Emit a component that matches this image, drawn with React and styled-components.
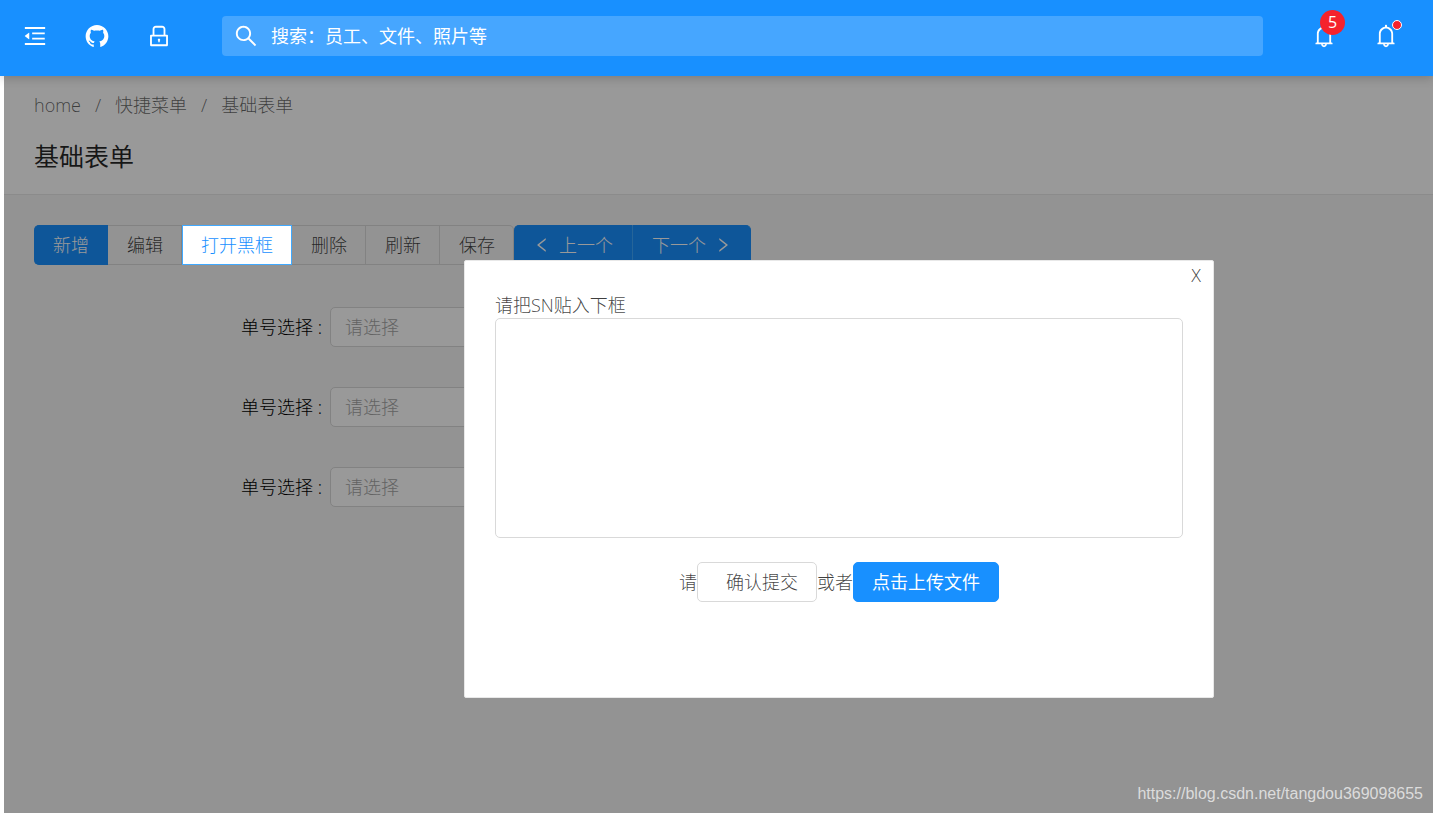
import React from 'react';
import styled, { createGlobalStyle } from 'styled-components';
import {
    AiFillGithub,
    AiOutlineBell,
    AiOutlineLeft,
    AiOutlineLock,
    AiOutlineMenuFold,
    AiOutlineRight,
    AiOutlineSearch,
} from 'react-icons/ai';

const GlobalStyle = createGlobalStyle`
    * {
        box-sizing: border-box;
    }
    body {
        margin: 0;
        background: #fff;
        color: rgba(0, 0, 0, 0.75);
        font-family: "Open Sans", "Noto Sans CJK SC", sans-serif;
        font-size: 18px;
        font-weight: 300;
        line-height: 26px;
    }
    button, input, select, textarea {
        font: inherit;
        color: inherit;
    }
`;

const Page = styled.div`
    display: flex;
    flex-direction: column;
    min-height: 100vh;
`;

const Header = styled.header`
    position: relative;
    z-index: 20;
    display: flex;
    align-items: flex-start;
    height: 76px;
    padding: 16px 16px 0 4px;
    background: #1890ff;
    color: #fff;
    box-shadow: 0 2px 10px rgba(0, 0, 0, 0.2);
`;

const IconButton = styled.button`
    display: flex;
    align-items: center;
    justify-content: center;
    width: 62px;
    height: 40px;
    padding: 0;
    border: 0;
    background: none;
    font-size: 26px;
    cursor: pointer;
`;

const SearchBox = styled.label`
    display: flex;
    flex: 1;
    align-items: center;
    gap: 12px;
    height: 40px;
    margin: 0 30px 0 32px;
    padding: 0 11px;
    border-radius: 4px;
    background: #46a6ff;
    font-size: 26px;
`;

const SearchInput = styled.input`
    flex: 1;
    min-width: 0;
    padding: 0;
    border: 0;
    outline: 0;
    background: none;
    font-size: 18px;
    font-weight: 400;
    &::placeholder {
        color: #fff;
        opacity: 1;
    }
`;

const BadgeHolder = styled.span`
    position: relative;
    display: flex;
`;

const CountBadge = styled.span`
    position: absolute;
    top: -13px;
    left: 9px;
    width: 25px;
    height: 25px;
    border-radius: 13px;
    background: #f5222d;
    font-size: 16px;
    font-weight: 400;
    line-height: 25px;
    text-align: center;
`;

const DotBadge = styled.span`
    position: absolute;
    top: -3px;
    right: -3px;
    width: 10px;
    height: 10px;
    border: 1px solid #fff;
    border-radius: 50%;
    background: #f5222d;
`;

const Body = styled.div`
    position: relative;
    flex: 1;
    margin-left: 4px;
    background: #f5f5f5;
`;

const PageHead = styled.div`
    padding: 16px 30px 20px;
    border-bottom: 1px solid #e8e8e8;
    background: #fff;
`;

const Breadcrumb = styled.nav`
    display: flex;
    gap: 14px;
    color: rgba(0, 0, 0, 0.6);
`;

const Crumb = styled.a`
    color: inherit;
    text-decoration: none;
`;

const Title = styled.h1`
    margin: 20px 0 0;
    color: rgba(0, 0, 0, 0.85);
    font-size: 25px;
    font-weight: 400;
    line-height: 36px;
`;

const Content = styled.main`
    padding: 30px;
`;

const Toolbar = styled.div`
    display: flex;
`;

const ButtonGroup = styled.div`
    display: flex;
    & > button:first-child {
        border-radius: 5px 0 0 5px;
    }
    & > button:last-child {
        border-radius: 0 5px 5px 0;
    }
`;

const ToolButton = styled.button`
    height: 40px;
    padding: 0 18px 0 19px;
    border: 1px solid #d9d9d9;
    border-left: 0;
    background: none;
    white-space: nowrap;
    cursor: pointer;
`;

const PrimaryToolButton = styled(ToolButton)`
    display: flex;
    align-items: center;
    gap: 8px;
    border-color: #1890ff;
    background: #1890ff;
    color: #fff;
    & + & {
        border-left: 1px solid #40a9ff;
    }
`;

/* stays above the mask while the dialog is open */
const ActiveToolButton = styled(ToolButton)`
    position: relative;
    z-index: 11;
    padding: 0 18px;
    border: 1px solid #40a9ff;
    background: #fff;
    color: #1890ff;
`;

const Form = styled.form`
    display: grid;
    gap: 40px;
    margin-top: 42px;
`;

const FormRow = styled.div`
    display: grid;
    grid-template-columns: 288px minmax(0, 572px);
    align-items: center;
    gap: 8px;
`;

const FormLabel = styled.label`
    color: #000;
    text-align: right;
`;

const Select = styled.select`
    appearance: none;
    width: 100%;
    height: 40px;
    padding: 0 14px;
    border: 1px solid #d9d9d9;
    border-radius: 5px;
    background: #fff;
    color: #a6a6a6;
`;

const Mask = styled.div`
    position: absolute;
    inset: 0;
    z-index: 10;
    background: rgba(0, 0, 0, 0.4);
`;

const Dialog = styled.section`
    position: absolute;
    top: 184px;
    left: 460px;
    z-index: 12;
    display: flex;
    flex-direction: column;
    width: 750px;
    height: 438px;
    padding: 0 30px;
    border: 1px solid #e8e8e8;
    border-radius: 2px;
    background: #fff;
`;

const CloseButton = styled.button`
    align-self: flex-end;
    height: 27px;
    margin: 0 -24px 4px 0;
    padding: 0 6px;
    border: 0;
    background: none;
    cursor: pointer;
`;

const SnInput = styled.textarea`
    height: 220px;
    padding: 5px 14px;
    border: 1px solid #d9d9d9;
    border-radius: 5px;
    outline: 0;
    resize: none;
`;

const DialogActions = styled.div`
    display: flex;
    align-items: center;
    justify-content: center;
    margin-top: 24px;
`;

const ConfirmButton = styled.button`
    height: 40px;
    padding: 0 18px 0 28px;
    border: 1px solid #d9d9d9;
    border-radius: 5px;
    background: #fff;
    cursor: pointer;
`;

const UploadButton = styled(ConfirmButton)`
    padding: 0 18px;
    border-color: #1890ff;
    background: #1890ff;
    color: #fff;
    font-weight: 400;
`;

const Watermark = styled.span`
    position: absolute;
    right: 10px;
    bottom: 8px;
    z-index: 13;
    color: #dcdcdc;
    font-family: "Liberation Sans", sans-serif;
    font-size: 16px;
    font-weight: 400;
    line-height: 22px;
`;

const orders = ['order-1', 'order-2', 'order-3'];

export default function App() {
    return (
        <Page>
            <GlobalStyle />
            <Header>
                <IconButton aria-label="菜单"><AiOutlineMenuFold /></IconButton>
                <IconButton aria-label="GitHub"><AiFillGithub /></IconButton>
                <IconButton aria-label="锁屏"><AiOutlineLock /></IconButton>
                <SearchBox>
                    <AiOutlineSearch />
                    <SearchInput type="text" aria-label="搜索" placeholder="搜索：员工、文件、照片等" />
                </SearchBox>
                <IconButton aria-label="通知">
                    <BadgeHolder>
                        <AiOutlineBell />
                        <CountBadge>5</CountBadge>
                    </BadgeHolder>
                </IconButton>
                <IconButton aria-label="消息">
                    <BadgeHolder>
                        <AiOutlineBell />
                        <DotBadge />
                    </BadgeHolder>
                </IconButton>
            </Header>
            <Body>
                <PageHead>
                    <Breadcrumb>
                        <Crumb href="#home">home</Crumb>
                        <span>/</span>
                        <Crumb href="#menu">快捷菜单</Crumb>
                        <span>/</span>
                        <Crumb href="#form">基础表单</Crumb>
                    </Breadcrumb>
                    <Title>基础表单</Title>
                </PageHead>
                <Content>
                    <Toolbar>
                        <ButtonGroup>
                            <PrimaryToolButton>新增</PrimaryToolButton>
                            <ToolButton>编辑</ToolButton>
                            <ActiveToolButton>打开黑框</ActiveToolButton>
                            <ToolButton>删除</ToolButton>
                            <ToolButton>刷新</ToolButton>
                            <ToolButton>保存</ToolButton>
                        </ButtonGroup>
                        <ButtonGroup>
                            <PrimaryToolButton><AiOutlineLeft />上一个</PrimaryToolButton>
                            <PrimaryToolButton>下一个<AiOutlineRight /></PrimaryToolButton>
                        </ButtonGroup>
                    </Toolbar>
                    <Form>
                        {orders.map(id => (
                            <FormRow key={id}>
                                <FormLabel htmlFor={id}>单号选择 :</FormLabel>
                                <Select id={id}>
                                    <option>请选择</option>
                                </Select>
                            </FormRow>
                        ))}
                    </Form>
                </Content>
                <Mask />
                <Dialog role="dialog" aria-labelledby="sn-label">
                    <CloseButton aria-label="关闭">X</CloseButton>
                    <label id="sn-label" htmlFor="sn">请把SN贴入下框</label>
                    <SnInput id="sn" />
                    <DialogActions>
                        请<ConfirmButton>确认提交</ConfirmButton>
                        或者<UploadButton>点击上传文件</UploadButton>
                    </DialogActions>
                </Dialog>
                <Watermark>https://blog.csdn.net/tangdou369098655</Watermark>
            </Body>
        </Page>
    );
}
